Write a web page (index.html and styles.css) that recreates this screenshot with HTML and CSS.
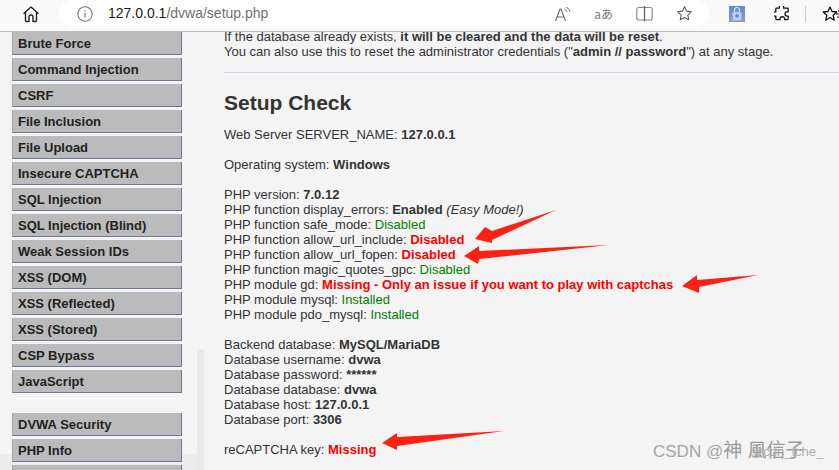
FILE: index.html
```html
<!DOCTYPE html>
<html lang="en">
<head>
  <meta charset="UTF-8">
  <title>DVWA Setup</title>
  <link rel="stylesheet" href="styles.css">
</head>
<body>
  <header class="toolbar">
    <svg class="icon-home" width="20" height="20" viewBox="0 0 20 20"><path d="M3 9.200 10 3l7 6.200M4.500 8v8.500a1 1 0 0 0 1 1H8v-4.500a2 2 0 0 1 4 0v4.500h2.500a1 1 0 0 0 1-1V8" fill="none" stroke="#222" stroke-width="1.400" stroke-linejoin="round" stroke-linecap="round"/></svg>
    <div class="address">
      <svg width="16" height="16" viewBox="0 0 16 16"><circle cx="8" cy="8" r="7.200" fill="none" stroke="#777" stroke-width="1.100"/><path d="M8 7v4.500M8 4.300v1.300" stroke="#777" stroke-width="1.200"/></svg>
      <span class="url"><span class="host">127.0.0.1</span>/dvwa/setup.php</span>
      <div class="address-icons">
        <svg width="16" height="16" viewBox="0 0 16 16"><path d="M.5 15 5 3h1l4.500 12M2 11h7" fill="none" stroke="#666" stroke-width="1.100"/><path d="M9.500 3a5 5 0 0 1 2.500 3M11 1a7 7 0 0 1 4 4.500" fill="none" stroke="#777" stroke-width="1"/></svg>
        <span class="aa">aあ</span>
        <svg width="17" height="17" viewBox="0 0 17 17"><rect x=".8" y="2.500" width="15.400" height="12.500" rx="2" fill="none" stroke="#888" stroke-width="1.100"/><path d="M8.500 1v15.500" stroke="#666" stroke-width="1.300"/></svg>
        <svg width="17" height="17" viewBox="0 0 18 18"><path d="M9 1.800l2.200 4.700 5.100.6-3.800 3.500 1 5.100L9 13.200l-4.500 2.500 1-5.100L1.700 7.100l5.100-.6z" fill="none" stroke="#555" stroke-width="1.100" stroke-linejoin="round"/></svg>
      </div>
    </div>
    <svg class="icon-lock" width="16" height="16" viewBox="0 0 16 16"><defs><linearGradient id="lockbg" x1="0" y1="0" x2="0" y2="1"><stop offset="0" stop-color="#5b8fd6"/><stop offset="1" stop-color="#9f93b8"/></linearGradient></defs><rect width="16" height="16" fill="url(#lockbg)"/><rect x="3.500" y="6" width="9" height="8.500" rx="1.500" fill="#b9cfe9"/><path d="M5.500 6V4a2.500 2.500 0 0 1 5 0v2" fill="none" stroke="#d9e4f2" stroke-width="1.200"/><circle cx="8" cy="10" r="2.400" fill="#5b8fd6" stroke="#e6eef8" stroke-width=".7"/></svg>
    <svg class="icon-puzzle" width="16" height="16" viewBox="2 3 15 14"><path d="M7 3.500a2 2 0 0 1 4 0V4.500h3.500a.8.800 0 0 1 .8.800V8h-1a2 2 0 0 0 0 4h1v2.500a.8.800 0 0 1-.8.800H12v-1a2.200 2.200 0 0 0-4.300 0v1H4.500a.8.800 0 0 1-.8-.8V12H3a2 2 0 0 1 0-4h.7V5.300a.8.800 0 0 1 .8-.8H7z" fill="none" stroke="#111" stroke-width="1.200" stroke-linejoin="round"/></svg>
    <span class="divider"></span>
    <svg class="icon-fav" width="22" height="18" viewBox="0 0 22 18"><path d="M8 2l2 4.500 4.800.5-3.600 3.300 1 4.900L8 12.500l-4.200 2.700 1-4.900L1.200 7 6 6.500z" fill="none" stroke="#111" stroke-width="1.300" stroke-linejoin="round"/><path d="M14 9h7M15 12h6M16 6h5" stroke="#111" stroke-width="1.200"/></svg>
  </header>

  <div class="page">
    <nav class="sidebar">
      <ul class="menu">
        <li>Brute Force</li>
        <li>Command Injection</li>
        <li>CSRF</li>
        <li>File Inclusion</li>
        <li>File Upload</li>
        <li>Insecure CAPTCHA</li>
        <li>SQL Injection</li>
        <li>SQL Injection (Blind)</li>
        <li>Weak Session IDs</li>
        <li>XSS (DOM)</li>
        <li>XSS (Reflected)</li>
        <li>XSS (Stored)</li>
        <li>CSP Bypass</li>
        <li>JavaScript</li>
      </ul>
      <ul class="menu">
        <li>DVWA Security</li>
        <li>PHP Info</li>
        <li class="cut"></li>
      </ul>
    </nav>
    <main class="content">
      <p class="intro">If the database already exists, <b>it will be cleared and the data will be reset</b>.<br>
      You can also use this to reset the administrator credentials ("<b>admin // password</b>") at any stage.</p>
      <hr>
      <h2>Setup Check</h2>
      <p>Web Server SERVER_NAME: <b>127.0.0.1</b></p>
      <p>Operating system: <b>Windows</b></p>
      <p>PHP version: <b>7.0.12</b><br>
      PHP function display_errors: <b>Enabled</b> <i>(Easy Mode!)</i><br>
      PHP function safe_mode: <span class="ok">Disabled</span><br>
      PHP function allow_url_include: <span class="bad">Disabled</span><br>
      PHP function allow_url_fopen: <span class="bad">Disabled</span><br>
      PHP function magic_quotes_gpc: <span class="ok">Disabled</span><br>
      PHP module gd: <span class="bad">Missing - Only an issue if you want to play with captchas</span><br>
      PHP module mysql: <span class="ok">Installed</span><br>
      PHP module pdo_mysql: <span class="ok">Installed</span></p>
      <p>Backend database: <b>MySQL/MariaDB</b><br>
      Database username: <b>dvwa</b><br>
      Database password: <b>******</b><br>
      Database database: <b>dvwa</b><br>
      Database host: <b>127.0.0.1</b><br>
      Database port: <b>3306</b></p>
      <p>reCAPTCHA key: <span class="bad">Missing</span></p>
    </main>
  </div>

  <!-- red arrows drawn over the screenshot -->
  <svg class="arrows" width="839" height="470" viewBox="0 0 839 470">
    <path d="M556 210 492 231 485 227 475 239 492 243 492 240Z"/>
    <path d="M609 245 479 251 479 246 464 256 478 264 479 259Z"/>
    <path d="M758 275 697 280 697 275 682 286 699 293 699 287Z"/>
    <path d="M504 431 397 437 397 433 382 443 397 450 397 446Z"/>
  </svg>
  <div class="watermark">CSDN @<span class="wm-name">神 風信子</span><span class="wm-over">@cdn_fche_</span></div>
</body>
</html>
```

FILE: styles.css
```css
html, body {
  margin: 0;
  padding: 0;
  height: 470px;
  overflow: hidden;
}

body {
  font-family: "Liberation Sans", Arial, sans-serif;
  font-size: 13px;
  line-height: 15px;
  color: #333;
  background: #f4f4f4;
  position: relative;
}

/*toolbar*/
.toolbar {
  height: 31px;
  background: #f9f9f9;
  border-bottom: 1px solid #b9b9b9;
  display: flex;
  align-items: center;
  overflow: hidden;
}

.toolbar > * {
  flex-shrink: 0;
}

.icon-home {
  margin: 0 0 4px 21px;
}

.address {
  width: 650px;
  height: 27px;
  margin: 0 0 4px 18px;
  padding-left: 18px;
  box-sizing: border-box;
  background: #fff;
  border-radius: 14px;
  display: flex;
  align-items: center;
}

.url {
  margin-left: 15px;
  font-size: 14px;
  color: #6f6f6f;
  flex: 1;
}

.host {
  color: #1a1a1a;
}

.address-icons {
  display: flex;
  align-items: center;
  gap: 23px;
  margin-right: 16px;
}

.aa {
  font-family: "Noto Sans CJK JP", "Liberation Sans", sans-serif;
  font-size: 12px;
  color: #777;
}

.icon-lock {
  margin: 0 0 4px 20px;
}

.icon-puzzle {
  margin: 0 0 4px 29px;
}

.divider {
  width: 1px;
  height: 16px;
  background: #ccc;
  margin: 0 0 4px 15px;
}

.icon-fav {
  margin: 0 0 4px 16px;
}

/*page*/
.page {
  display: flex;
  height: 438px;
  overflow: hidden;
}

.sidebar {
  width: 204px;
  flex-shrink: 0;
  padding-left: 12px;
  box-sizing: border-box;
  background:
    linear-gradient(#e9e9e9, #e9e9e9) right 0 top 317px / 7px 100% no-repeat,
    linear-gradient(#ececec, #ececec) left 0 top 422px / 100% 100% no-repeat;
}

.menu {
  list-style: none;
  margin: 0 0 20px;
  padding: 0;
  width: 170px;
}

.menu li {
  height: 22px;
  line-height: 23px;
  margin-bottom: 3px;
  padding-left: 5px;
  background: #bbb;
  border-left: 1px solid #a5a5a5;
  border-bottom: 1px solid #6b7a94;
  border-right: 1px solid #6b7a94;
  font-weight: bold;
  font-size: 13px;
  color: #222;
}

.content {
  flex: 1;
  padding-left: 20px;
  margin-top: -3px;
}

.content p {
  margin: 0 0 15px;
}

.content .intro {
  margin-bottom: 13px;
}

hr {
  border: 0;
  border-top: 1px solid #c5d5f0;
  margin: 0 0 18px;
}

h2 {
  font-size: 21px;
  line-height: 24px;
  margin: 0 0 12px;
  color: #333;
}

.ok {
  color: #008000;
}

.bad {
  color: #ff0000;
  font-weight: bold;
}

.arrows {
  position: absolute;
  top: 0;
  left: 0;
  pointer-events: none;
}

.arrows path {
  fill: #fb2115;
}

/*watermark*/
.watermark {
  position: absolute;
  top: 439px;
  left: 653px;
  font-size: 17px;
  line-height: 20px;
  color: #a5a5a5;
  white-space: nowrap;
}

.wm-name {
  font-family: "Noto Sans CJK SC", sans-serif;
  font-size: 19px;
  word-spacing: 1px;
  color: #999;
}

.wm-over {
  position: absolute;
  top: 3px;
  left: 97px;
  font-size: 13px;
  color: #b0b0b0;
}
```
